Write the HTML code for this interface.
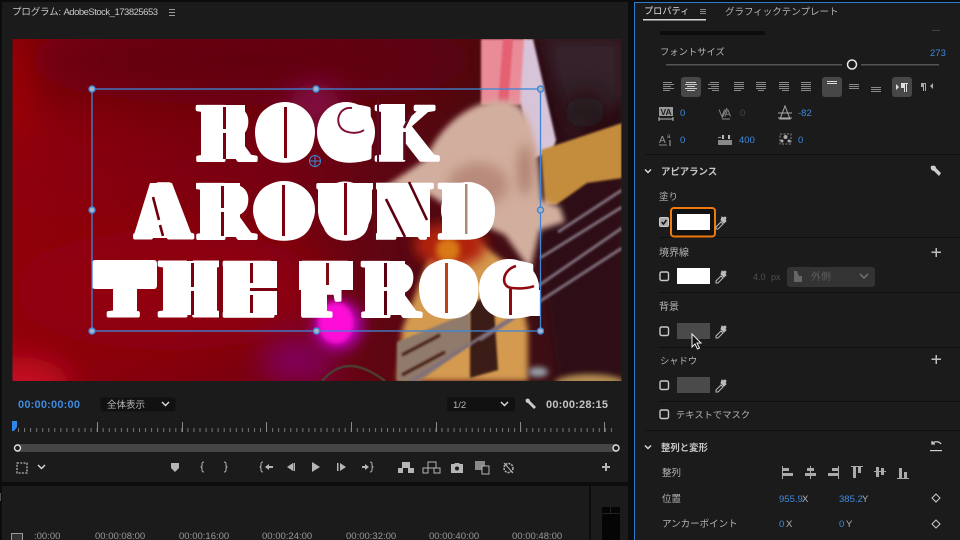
<!DOCTYPE html>
<html><head><meta charset="utf-8"><style>
html,body{margin:0;padding:0;background:#0c0c0c}
#r{position:relative;width:960px;height:540px;overflow:hidden;background:#0c0c0c;font-family:"Liberation Sans","Noto Sans CJK JP",sans-serif;font-size:10px;color:#b4b4b4}
.a{position:absolute;white-space:nowrap;line-height:12px}
.p{position:absolute;background:#1b1b1b}
.b{color:#3d8be0}
svg{position:absolute;left:0;top:0}
</style></head><body><div id="r">
<div class="p" style="left:2px;top:2px;width:626px;height:480px"></div>
<div class="p" style="left:2px;top:486px;width:587px;height:54px"></div>
<div class="p" style="left:591px;top:486px;width:37px;height:54px"></div>
<div class="p" style="left:634px;top:2px;width:326px;height:538px;border-left:1px solid #2f7bd0;border-top:1px solid #2f7bd0;box-sizing:border-box"></div>

<svg width="960" height="540" viewBox="0 0 960 540">
<defs>
<clipPath id="v"><rect x="12.500" y="39" width="609" height="342"/></clipPath>
<linearGradient id="bg" x1="0" y1="0" x2="1" y2="0"><stop offset="0" stop-color="#90000c"/><stop offset=".45" stop-color="#740012"/><stop offset=".75" stop-color="#4a0a12"/><stop offset="1" stop-color="#2c1216"/></linearGradient>
<filter id="f1" filterUnits="userSpaceOnUse" x="0" y="0" width="960" height="540"><feGaussianBlur stdDeviation="1"/></filter>
<filter id="f3" filterUnits="userSpaceOnUse" x="0" y="0" width="960" height="540"><feGaussianBlur stdDeviation="3"/></filter>
<filter id="f6" filterUnits="userSpaceOnUse" x="0" y="0" width="960" height="540"><feGaussianBlur stdDeviation="6"/></filter>
<filter id="f14" filterUnits="userSpaceOnUse" x="0" y="0" width="960" height="540"><feGaussianBlur stdDeviation="14"/></filter>
<filter id="f30" filterUnits="userSpaceOnUse" x="0" y="0" width="960" height="540"><feGaussianBlur stdDeviation="30"/></filter>
<pattern id="tk" x="18" y="428" width="6.050" height="4" patternUnits="userSpaceOnUse"><rect x="0" y="0" width="1" height="4" fill="#777"/></pattern>
</defs>
<g clip-path="url(#v)">
<rect x="12" y="39" width="610" height="342" fill="url(#bg)"/>
<ellipse cx="250" cy="60" rx="240" ry="45" fill="#600010" filter="url(#f30)"/>
<ellipse cx="16" cy="90" rx="10" ry="55" fill="#a00000" filter="url(#f14)"/>
<ellipse cx="170" cy="290" rx="160" ry="60" fill="#920010" filter="url(#f30)"/>
<ellipse cx="15" cy="385" rx="55" ry="28" fill="#c41020" filter="url(#f14)"/>
<ellipse cx="315" cy="105" rx="26" ry="22" fill="#840a4c" filter="url(#f14)"/>
<ellipse cx="298" cy="360" rx="38" ry="24" fill="#800058" filter="url(#f14)"/>
<!-- right dark -->
<polygon points="520,39 622,39 622,381 560,381 540,250" fill="#2e1014" filter="url(#f3)"/>
<polygon points="545,39 622,39 622,100 570,140" fill="#34232a" filter="url(#f6)"/>
<ellipse cx="585" cy="112" rx="22" ry="16" fill="#1f0c10" filter="url(#f14)"/>
<!-- strap -->
<polygon points="481,39 527,39 522,105 481,105" fill="#ea8c98" filter="url(#f1)"/>
<polygon points="503,39 513,39 508,105 498,105" fill="#e46072" filter="url(#f1)"/>
<polygon points="524,39 533,39 556,140 553,150 530,160 520,100" fill="#d8c4d8" filter="url(#f1)"/>
<!-- guitar upper -->
<polygon points="541,150 622,123 622,178 587,183 556,205 545,205" fill="#c48c3c" filter="url(#f1)"/>
<!-- lower body -->
<polygon points="430,255 470,235 515,270 528,330 528,381 397,381 402,330" fill="#d49a50" filter="url(#f3)"/>
<ellipse cx="450" cy="245" rx="36" ry="22" fill="#b02010" filter="url(#f6)"/>
<ellipse cx="448" cy="250" rx="12" ry="12" fill="#d87818" filter="url(#f3)"/>
<polygon points="470,305 493,292 498,370 470,378" fill="#3a1a18" filter="url(#f1)"/>
<polygon points="397,342 470,312 470,345 420,381 397,381" fill="#8f7a6c" filter="url(#f1)"/>
<g stroke="#4a2018" stroke-width="3" filter="url(#f1)"><line x1="402" y1="355" x2="440" y2="335"/><line x1="402" y1="375" x2="445" y2="352"/></g>
<ellipse cx="590" cy="383" rx="35" ry="9" fill="#b08a50" filter="url(#f3)"/>
<ellipse cx="538" cy="372" rx="10" ry="5" fill="#9aa0a8" filter="url(#f3)"/>
<!-- hand -->
<path d="M425,160 C440,125 470,102 500,100 C525,100 530,120 537,150 L542,200 L560,207 L565,222 L540,230 L530,270 L505,235 L460,215 L430,195 L380,190 Z" fill="#d2ae9e" filter="url(#f3)"/>
<ellipse cx="525" cy="170" rx="6" ry="26" fill="#a87868" filter="url(#f6)"/>
<ellipse cx="478" cy="185" rx="30" ry="22" fill="#b88a7c" filter="url(#f6)"/>
<!-- strings -->
<g stroke="#7f6f7c" stroke-width="3" fill="none" filter="url(#f1)">
<line x1="558" y1="232" x2="622" y2="190"/><line x1="540" y1="258" x2="622" y2="207"/>
<line x1="535" y1="288" x2="622" y2="228"/><line x1="480" y1="340" x2="622" y2="248"/><line x1="405" y1="385" x2="540" y2="300"/>
</g>
<!-- magenta -->
<ellipse cx="338" cy="325" rx="26" ry="26" fill="#a800a0" filter="url(#f6)"/>
<ellipse cx="336" cy="323" rx="18" ry="21" fill="#ff10d8" filter="url(#f3)"/>
<path d="M322,381 C340,360 360,362 385,381" stroke="#4c3c30" stroke-width="2.500" fill="none"/>
</g>

<!-- big title: letter mass beneath the real text -->
<g fill="#fff">
<rect x="201" y="105" width="44" height="54"/><ellipse cx="285" cy="132" rx="30" ry="30"/><ellipse cx="346" cy="132" rx="29" ry="30"/><rect x="381" y="104" width="24" height="56"/>
<polygon points="150,183 172,183 193,238 133,238"/><rect x="200" y="183" width="40" height="54"/><ellipse cx="284" cy="210" rx="31" ry="29"/>
<rect x="318" y="183" width="54" height="30"/><ellipse cx="345" cy="210" rx="27" ry="28.500"/><rect x="377" y="183" width="53" height="54"/><rect x="442" y="183" width="28" height="54"/><ellipse cx="468" cy="210" rx="27" ry="28"/>
<rect x="92" y="260" width="65" height="29" rx="3"/><rect x="113" y="260" width="24" height="56"/><rect x="163" y="261" width="54" height="54"/><rect x="223" y="261" width="54" height="54"/>
<rect x="299" y="261" width="54" height="29"/><rect x="301" y="261" width="26" height="55"/><rect x="365" y="261" width="40" height="54"/><ellipse cx="448" cy="288" rx="29" ry="29"/><ellipse cx="509" cy="288" rx="30" ry="29"/><rect x="510" y="290" width="30" height="26"/>
</g>
<g fill="#fff" stroke="#fff" stroke-width="3.400" stroke-linejoin="round" font-family="'Liberation Serif',serif" font-weight="700" font-size="82">
<text x="196 253 317 375" y="160">ROCK</text>
<text x="134 196 252 316 374 438" y="238">AROUND</text>
<text x="96 158 223 280 301 361 417 477" y="316" xml:space="preserve">THE FROG</text>
</g>
<!-- gaps and stencil slits -->
<g fill="#7c0010">
<rect x="219" y="258" width="3.500" height="60"/>
<rect x="373" y="178" width="3" height="62" fill="#620a10"/><rect x="194" y="178" width="2" height="20"/>
<rect x="377" y="100" width="2" height="62" fill="#5e0a2a"/>
<rect x="223" y="107" width="3" height="22"/><rect x="223" y="133" width="3" height="26"/>
<rect x="284" y="107" width="3" height="51"/>
<rect x="221" y="186" width="3" height="22"/><rect x="221" y="212" width="3" height="24"/>
<rect x="282" y="185" width="3" height="51"/>
<rect x="344" y="183" width="3" height="52"/>
<rect x="465" y="184" width="2.500" height="50" fill="#b08878"/>
<rect x="191" y="263" width="3" height="24"/><rect x="191" y="291" width="3" height="24"/>
<rect x="250" y="263" width="3" height="20"/><rect x="250" y="295" width="3" height="18"/>
<rect x="250" y="288" width="28" height="3"/>
<rect x="326" y="263" width="3" height="22" fill="#7a0c14"/>
<rect x="384" y="263" width="3" height="24" fill="#5a0010"/><rect x="384" y="291" width="3" height="24" fill="#5a0010"/>
<rect x="445" y="263" width="3" height="50" fill="#c04010"/>
<rect x="509" y="289" width="3" height="26" fill="#900810"/>
</g>
<g fill="none" stroke-width="2.600" stroke="#700010">
<path d="M153,197L159,220M160,225L163,236"/><path d="M386,199L405,237M409,182L427,220" stroke="#5c0010"/>
<path d="M404.500,132V160M404,128L412,112" stroke="#5c0a20"/>
<path d="M352,108C338,106 333,125 345,131C352,134 360,133 364,130" stroke="#80103c" stroke-width="2"/>
<path d="M516,266C502,270 500,287 512,288C520,289 530,288 534,286" stroke="#900810"/>
</g>

<!-- bbox -->
<rect x="92" y="89" width="448.500" height="242" fill="none" stroke="#3f86d8" stroke-width="1.300"/>
<g fill="#a9b4c0" stroke="#3f86d8" stroke-width="1.400">
<circle cx="92" cy="89" r="3"/><circle cx="316" cy="89" r="3"/><circle cx="540.500" cy="89" r="3"/>
<circle cx="92" cy="210" r="3"/><circle cx="540.500" cy="210" r="3"/>
<circle cx="92" cy="331" r="3"/><circle cx="316.500" cy="331" r="3"/><circle cx="540.500" cy="331" r="3"/></g>
<g stroke="#3f86d8" stroke-width="1" fill="none"><circle cx="315" cy="161" r="5.500"/><path d="M309,161H321M315,155V167"/></g>

<!-- title bar -->
<g fill="#9a9a9a"><rect x="169" y="9" width="6" height="1"/><rect x="169" y="12" width="6" height="1"/><rect x="169" y="15" width="6" height="1"/></g>

<!-- dropdowns -->
<rect x="100.500" y="397.500" width="75" height="14" rx="2" fill="#111"/><rect x="447" y="397.500" width="68" height="14" rx="2" fill="#111"/>
<g stroke="#ddd" stroke-width="1.400" fill="none"><path d="M162,402L165.500,405.500L169,402"/><path d="M501,402L504.500,405.500L508,402"/><path d="M38,465L41.500,468.500L45,465"/></g>
<path d="M526,399C528,398 530,399 530,401L536,407L534,409L528,403C526,403 525,401 526,399Z" fill="#ccc"/>

<!-- ruler -->
<rect x="18" y="428" width="599" height="4" fill="url(#tk)"/>
<g fill="#8a8a8a"><rect x="97" y="422" width="1" height="10"/><rect x="182" y="422" width="1" height="10"/><rect x="266" y="422" width="1" height="10"/><rect x="351" y="422" width="1" height="10"/><rect x="436" y="422" width="1" height="10"/><rect x="520" y="422" width="1" height="10"/><rect x="604" y="422" width="1" height="10"/></g>
<path d="M12,421H17V427L14,431H12Z" fill="#2f86e8"/>
<rect x="17" y="444" width="600" height="8" fill="#454545"/>
<g fill="#1b1b1b" stroke="#e0e0e0" stroke-width="1.400"><circle cx="17.500" cy="448" r="3"/><circle cx="616" cy="448" r="3"/></g>

<!-- transport -->
<g fill="#b5b5b5">
<path d="M17,463h10v10h-10z" fill="none" stroke="#b5b5b5" stroke-width="1.300" stroke-dasharray="2 1.300"/>
<path d="M171,463h8v5l-4,4l-4,-4z"/>
<path d="M204,462c-2,0 -2,1 -2,2v2l-1,1l1,1v2c0,1 0,2 2,2" fill="none" stroke="#b5b5b5"/>
<path d="M224,462c2,0 2,1 2,2v2l1,1l-1,1v2c0,1 0,2 -2,2" fill="none" stroke="#b5b5b5"/>
<path d="M263,462c-2,0 -2,1 -2,2v2l-1,1l1,1v2c0,1 0,2 2,2" fill="none" stroke="#b5b5b5"/>
<path d="M265,467l4,-3v2h4v2h-4v2z"/>
<path d="M287,467l6,-4v8z"/><rect x="293.500" y="463" width="1.500" height="8"/>
<path d="M312,462l8,5l-8,5z"/>
<rect x="337" y="463" width="1.500" height="8"/><path d="M340,463l6,4l-6,4z"/>
<path d="M362,466h3v-2l4,3l-4,3v-2h-3z"/>
<path d="M370,462c2,0 2,1 2,2v2l1,1l-1,1v2c0,1 0,2 -2,2" fill="none" stroke="#b5b5b5"/>
<path d="M398,468h5v5h-5zM408,468h6v5h-6zM402,462h8v6h-8z"/>
<path d="M423,468h5v5h-5zM434,468h6v5h-6zM428,462h8v6h-8z" fill="none" stroke="#b5b5b5"/>
<path d="M451,464h3l1,-1h4l1,1h3v9h-12z"/><circle cx="457" cy="468.500" r="2" fill="#1b1b1b"/>
<rect x="475" y="461" width="10" height="9" fill="#888"/><rect x="482" y="466" width="7" height="8" fill="#1b1b1b" stroke="#b5b5b5"/>
<circle cx="508.500" cy="468" r="4.500" fill="none" stroke="#b5b5b5" stroke-width="1.500" stroke-dasharray="2 1"/><path d="M504,463L513,473" stroke="#b5b5b5"/>
<path d="M605,463h2v3h3v2h-3v3h-2v-3h-3v-2h3z"/>
</g>
<!-- timeline -->
<rect x="0" y="493" width="1" height="8" fill="#555"/>
<rect x="11.500" y="533.500" width="11" height="8" fill="#333" stroke="#9a9a9a"/>
<rect x="589" y="486" width="2" height="54" fill="#0c0c0c"/>
<rect x="602" y="507" width="18" height="33" fill="#050505"/><rect x="602" y="513" width="18" height="1" fill="#222"/><rect x="610" y="507" width="1" height="6" fill="#222"/>

<!-- right panel details -->
<rect x="660" y="31" width="105" height="4" rx="1" fill="#0c0c0c"/><rect x="932" y="30" width="8" height="1" fill="#444"/>
<rect x="643" y="19" width="63" height="1.500" fill="#d8d8d8"/>
<g fill="#888"><rect x="700" y="9" width="6" height="1"/><rect x="700" y="11" width="6" height="1"/><rect x="700" y="13" width="6" height="1"/></g>
<g fill="#555"><rect x="666" y="64" width="176" height="1.500"/><rect x="861" y="64" width="78" height="1.500"/></g>
<circle cx="852" cy="64.500" r="4.500" fill="#1b1b1b" stroke="#e8e8e8" stroke-width="1.500"/>
<g fill="#474747"><rect x="681" y="77" width="20" height="20" rx="3"/><rect x="822" y="77" width="20" height="20" rx="3"/><rect x="892" y="77" width="20" height="20" rx="3"/></g>
<g stroke="#8a8a8a" stroke-width="1" fill="none">
<path d="M663,82.500h9M663,84.500h11M663,86.500h8M663,88.500h11M663,90.500h7"/>
<path d="M686,82.500h10M685,84.500h12M687,86.500h8M685,88.500h12M687,90.500h8" stroke="#ccc"/>
<path d="M710,82.500h9M708,84.500h11M711,86.500h8M708,88.500h11M712,90.500h7"/>
<path d="M734,82.500h10M734,84.500h10M734,86.500h10M734,88.500h10M734,90.500h7"/>
<path d="M756,82.500h10M756,84.500h10M756,86.500h10M756,88.500h10M758,90.500h6"/>
<path d="M779,82.500h10M779,84.500h10M779,86.500h10M779,88.500h10M782,90.500h7"/>
<path d="M801,82.500h10M801,84.500h10M801,86.500h10M801,88.500h10M801,90.500h10"/>
<path d="M827,81.500h10M827,83.500h10" stroke="#ddd"/><path d="M849,84.500h10M849,86.500h10M849,88.500h10"/><path d="M871,87.500h10M871,89.500h10M871,91.500h10"/>
</g>
<g fill="#ddd"><path d="M896,84l3,3l-3,3zM904,83h4v1h-1v8h-1v-8h-1v8h-1zM901,83h3v5h-3z"/></g>
<g fill="#aaa"><path d="M933,83l-3,3l3,3zM921,83h5v8h-1v-7h-1v7h-1v-4h-2z"/></g>
<!-- metric icons -->
<rect x="659" y="107" width="14" height="9" fill="#999"/>
<text x="660.500" y="115" font-family="'Liberation Sans',sans-serif" font-size="8.500" font-weight="700" fill="#1b1b1b">VA</text>
<path d="M659,119h14M659,117v4M673,117v4" stroke="#bbb" fill="none"/>
<text x="718.500" y="116.500" font-family="'Liberation Sans',sans-serif" font-size="10" fill="#8a8a8a">VA</text>
<path d="M727,108L722,118M722,119h8" stroke="#8a8a8a" fill="none"/>
<path d="M785,106l-5,13h10z M778,113h14M778,118h14" stroke="#aaa" fill="none"/>
<text x="659" y="143" font-family="'Liberation Sans',sans-serif" font-size="10" fill="#999">A</text>
<text x="667" y="138" font-family="'Liberation Sans',sans-serif" font-size="6" fill="#999">a</text>
<path d="M659,145h8" stroke="#888" fill="none"/><path d="M670,140v6" stroke="#aaa" fill="none"/>
<rect x="718" y="140" width="14" height="5" fill="#888"/><rect x="722" y="135" width="2" height="4" fill="#bbb"/><rect x="728" y="135" width="2" height="4" fill="#bbb"/><rect x="718" y="137" width="3" height="1" fill="#999"/>
<path d="M780,134h11v10h-11z" fill="none" stroke="#888" stroke-dasharray="2 1.500"/><circle cx="785.500" cy="137" r="2" fill="#aaa"/><circle cx="782" cy="141" r="1.500" fill="#aaa"/><circle cx="789" cy="141" r="1.500" fill="#aaa"/>
<!-- dividers -->
<g fill="#101010"><rect x="645" y="154" width="315" height="1"/><rect x="659" y="237" width="301" height="1"/><rect x="659" y="292" width="301" height="1"/><rect x="659" y="347" width="301" height="1"/><rect x="659" y="401" width="301" height="1"/><rect x="645" y="430" width="315" height="1"/></g>
<g stroke="#ddd" stroke-width="1.400" fill="none"><path d="M645,169.500l3,3l3,-3"/><path d="M645,445.500l3,3l3,-3"/></g>
<path d="M931,166C934,165 936,166 936,168L941,173L939,176L934,171C932,171 930,169 931,166Z" fill="#ccc"/>
<!-- swatches -->
<rect x="671" y="208" width="44" height="28.500" rx="3" fill="#121212" stroke="#f07a10" stroke-width="2"/>
<rect x="677" y="214" width="33" height="16" fill="#fff"/>
<rect x="677" y="268" width="33" height="16" fill="#fff"/>
<rect x="677" y="323" width="33" height="16" fill="#4a4a4a"/>
<rect x="677" y="377" width="33" height="16" fill="#4a4a4a"/>
<rect x="659.500" y="217.500" width="9" height="9" rx="1.500" fill="#aaa" stroke="#ccc"/>
<path d="M661.500,222l2,2l3,-4" stroke="#111" stroke-width="1.500" fill="none"/>
<g fill="none" stroke="#c8c8c8" stroke-width="1.400"><rect x="660" y="272" width="8.500" height="8.500" rx="1.500"/><rect x="660" y="327" width="8.500" height="8.500" rx="1.500"/><rect x="660" y="381" width="8.500" height="8.500" rx="1.500"/><rect x="660" y="410" width="8.500" height="8.500" rx="1.500"/></g>
<g fill="none" stroke="#bbb">
<path d="M716,227l5,-5l2,2l-5,5h-2z"/><path d="M721,220l3,3l2,-2l-1,-1l1,-2l-1,-1l-2,1l-1,-1z" fill="#bbb"/>
<path d="M716,281l5,-5l2,2l-5,5h-2z"/><path d="M721,274l3,3l2,-2l-1,-1l1,-2l-1,-1l-2,1l-1,-1z" fill="#bbb"/>
<path d="M716,336l5,-5l2,2l-5,5h-2z"/><path d="M721,329l3,3l2,-2l-1,-1l1,-2l-1,-1l-2,1l-1,-1z" fill="#bbb"/>
<path d="M716,390l5,-5l2,2l-5,5h-2z"/><path d="M721,383l3,3l2,-2l-1,-1l1,-2l-1,-1l-2,1l-1,-1z" fill="#bbb"/>
</g>
<g fill="#bcbcbc"><path d="M935.500,248h1.500v3.500h4v1.500h-4v4h-1.500v-4h-4v-1.500h4z"/><path d="M935.500,355h1.500v3.500h4v1.500h-4v4h-1.500v-4h-4v-1.500h4z"/></g>
<rect x="787" y="267" width="88" height="20" rx="3" fill="#333"/>
<path d="M794,271h3l2,5h3v6h-8z" fill="#666"/><path d="M860,274l4,4l4,-4" stroke="#777" stroke-width="1.400" fill="none"/>
<!-- cursor -->
<path d="M692,334V347L695,344L697.500,349L699.500,348L697,343H701Z" fill="#111" stroke="#eee" stroke-width="1"/>
<!-- reset -->
<path d="M932,444a5,4 0 0 1 9,0M932,441v3h3" stroke="#ccc" stroke-width="1.300" fill="none"/>
<rect x="930" y="450" width="12" height="1.200" fill="#ccc"/>
<!-- align -->
<g fill="#aaa">
<rect x="782" y="466" width="1" height="13"/><rect x="783" y="468" width="6" height="3"/><rect x="783" y="473" width="10" height="3"/>
<rect x="810" y="466" width="1" height="13"/><rect x="807" y="468" width="7" height="3"/><rect x="805" y="473" width="11" height="3"/>
<rect x="838" y="466" width="1" height="13"/><rect x="832" y="468" width="6" height="3"/><rect x="828" y="473" width="10" height="3"/>
<rect x="851" y="466" width="12" height="1"/><rect x="853" y="467" width="3" height="11"/><rect x="858" y="467" width="3" height="6"/>
<rect x="874" y="471" width="12" height="1"/><rect x="876" y="467" width="3" height="10"/><rect x="881" y="468" width="3" height="7"/>
<rect x="897" y="478" width="12" height="1"/><rect x="899" y="468" width="3" height="10"/><rect x="904" y="472" width="3" height="6"/>
</g>
<g fill="none" stroke="#ccc"><path d="M936,494l4,4l-4,4l-4,-4z"/><path d="M936,520l4,4l-4,4l-4,-4z"/></g>
</svg>

<!-- text -->
<div class="a" style="left:12px;top:7px;color:#c8c8c8;font-size:9.500px;letter-spacing:-.15px">プログラム: <span style="letter-spacing:-.5px">AdobeStock_173825653</span></div>
<div class="a b" style="left:18px;top:399px;font-size:11px;font-weight:700;letter-spacing:.2px">00:00:00:00</div>
<div class="a" style="left:107px;top:400px;font-size:9.500px">全体表示</div>
<div class="a" style="left:453px;top:400px;font-size:9.500px">1/2</div>
<div class="a" style="left:546px;top:399px;font-size:11px;font-weight:700;letter-spacing:.2px;color:#c4c4c4">00:00:28:15</div>
<div class="a" style="left:34px;top:531px;font-size:9.500px;color:#999">:00:00</div>
<div class="a" style="left:95px;top:531px;font-size:9.500px;color:#999">00:00:08:00</div>
<div class="a" style="left:179px;top:531px;font-size:9.500px;color:#999">00:00:16:00</div>
<div class="a" style="left:262px;top:531px;font-size:9.500px;color:#999">00:00:24:00</div>
<div class="a" style="left:346px;top:531px;font-size:9.500px;color:#999">00:00:32:00</div>
<div class="a" style="left:429px;top:531px;font-size:9.500px;color:#999">00:00:40:00</div>
<div class="a" style="left:512px;top:531px;font-size:9.500px;color:#999">00:00:48:00</div>

<div class="a" style="left:644px;top:5px;font-size:9.200px;color:#e0e0e0">プロパティ</div>
<div class="a" style="left:725px;top:7px;font-size:9.500px">グラフィックテンプレート</div>
<div class="a" style="left:660px;top:46px;font-size:9.300px">フォントサイズ</div>
<div class="a b" style="left:930px;top:48px;font-size:9.500px">273</div>
<div class="a b" style="left:680px;top:108px;font-size:9.500px">0</div>
<div class="a" style="left:740px;top:108px;font-size:9.500px;color:#444">0</div>
<div class="a b" style="left:798px;top:108px;font-size:9.500px">-82</div>
<div class="a b" style="left:680px;top:135px;font-size:9.500px">0</div>
<div class="a b" style="left:739px;top:135px;font-size:9.500px">400</div>
<div class="a b" style="left:798px;top:135px;font-size:9.500px">0</div>
<div class="a" style="left:661px;top:166px;font-size:9.400px;color:#c8c8c8;font-weight:700">アピアランス</div>
<div class="a" style="left:659px;top:192px;font-size:9.500px">塗り</div>
<div class="a" style="left:659px;top:248px;font-size:10px">境界線</div>
<div class="a" style="left:753px;top:271px;font-size:9px;color:#505050">4.0</div>
<div class="a" style="left:771px;top:271px;font-size:9px;color:#505050">px</div>
<div class="a" style="left:811px;top:272px;font-size:10px;color:#5c5c5c">外側</div>
<div class="a" style="left:659px;top:302px;font-size:10px">背景</div>
<div class="a" style="left:660px;top:355px;font-size:9.300px">シャドウ</div>
<div class="a" style="left:676px;top:409px;font-size:9.300px">テキストでマスク</div>
<div class="a" style="left:661px;top:442px;font-size:9.400px;color:#c8c8c8;font-weight:700">整列と変形</div>
<div class="a" style="left:662px;top:468px;font-size:9.500px">整列</div>
<div class="a" style="left:662px;top:494px;font-size:9.500px">位置</div>
<div class="a b" style="left:779px;top:494px;font-size:9.500px">955.9</div>
<div class="a" style="left:802px;top:494px;font-size:9.500px">X</div>
<div class="a b" style="left:839px;top:494px;font-size:9.500px">385.2</div>
<div class="a" style="left:862px;top:494px;font-size:9.500px">Y</div>
<div class="a" style="left:662px;top:519px;font-size:9.500px">アンカーポイント</div>
<div class="a b" style="left:779px;top:519px;font-size:9.500px">0</div>
<div class="a" style="left:786px;top:519px;font-size:9.500px">X</div>
<div class="a b" style="left:839px;top:519px;font-size:9.500px">0</div>
<div class="a" style="left:846px;top:519px;font-size:9.500px">Y</div>
</div></body></html>
